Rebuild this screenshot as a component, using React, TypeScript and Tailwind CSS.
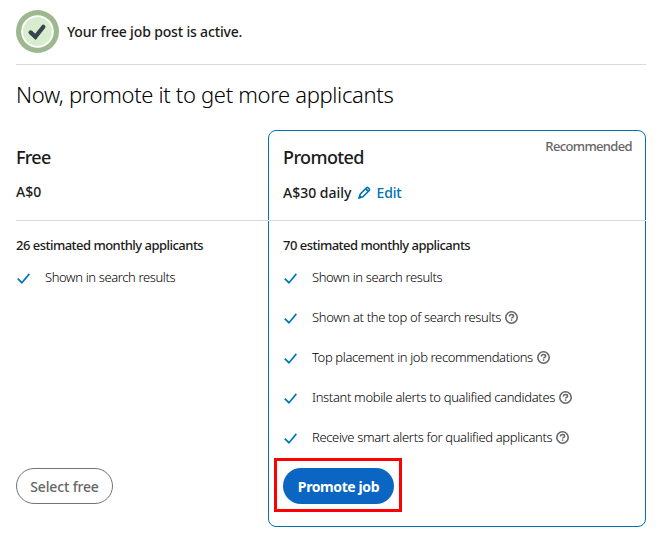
const FONT = "font-['Noto_Sans','Open_Sans',sans-serif]";

function CheckIcon() {
  return (
    <svg className="mt-[3px] h-[11px] w-[13px] shrink-0" viewBox="0 0 13 11" fill="none">
      <path d="M0.8 5.6 4.9 9.7 12.4 0.9" stroke="#0077b5" strokeWidth="1.7" />
    </svg>
  );
}

function HelpIcon() {
  return (
    <svg className="ml-[4px] h-[13px] w-[13px] shrink-0" viewBox="0 0 13 13" fill="none" stroke="#666">
      <circle cx="6.5" cy="6.5" r="5.7" strokeWidth="1.6" />
      <path d="M4.4 5.4C4.4 4.2 5.3 3.6 6.5 3.6s2.1.6 2.1 1.6c0 1.2-2 1.2-2 2.4" strokeWidth="1.5" />
      <path d="M5.8 9.1h1.5" strokeWidth="1.5" />
    </svg>
  );
}

function PencilIcon() {
  return (
    <svg className="ml-[7px] h-[13px] w-[13px] shrink-0" viewBox="0 0 13 13" fill="none" stroke="#0073b1">
      <path d="M1.1 11.9 2.2 8.1 8.5 1.8c.5-.5 1.1-.5 1.6 0l1.1 1.1c.5.5.5 1.1 0 1.6L4.9 10.8Z" strokeWidth="1.6" />
      <path d="M7.6 2.7l2.7 2.7" strokeWidth="1.8" />
      <path d="M.4 12.6 1.6 8.8 4.2 11.4Z" fill="#0073b1" stroke="none" />
    </svg>
  );
}

function SuccessBadge() {
  return (
    <svg className="h-[43px] w-[43px] shrink-0" viewBox="0 0 43 43">
      <circle cx="21.5" cy="21.5" r="21.5" fill="#9db78f" />
      <circle cx="21.5" cy="21.5" r="16.3" fill="#fff" />
      <circle cx="21.5" cy="21.5" r="14.5" fill="#d7edce" />
      <path d="M14.6 22.4 19.4 26.9 27.4 16.8" fill="none" stroke="#38434f" strokeWidth="4.2" strokeLinecap="round" />
    </svg>
  );
}

function Feature({ text, tracking, help = false }: { text: string; tracking: string; help?: boolean }) {
  return (
    <li className="flex h-10 items-center">
      <CheckIcon />
      <span className={`ml-[15px] pt-[2px] text-[13px] font-light text-black ${tracking}`}>{text}</span>
      {help && <HelpIcon />}
    </li>
  );
}

export default function App() {
  return (
    <main className={`h-[544px] w-[663px] overflow-hidden bg-white pr-[17px] pl-4 pt-[10px] whitespace-nowrap text-[#1a1a1a] ${FONT}`}>
      <header className="flex h-[55px] items-start border-b border-[#d9d9d9]">
        <SuccessBadge />
        <p className="ml-2 mt-[11px] text-[14px] leading-[22px] font-medium tracking-[-0.16px]">
          Your free job post is active.
        </p>
      </header>
      <h1 className="flex h-[65px] items-center pb-[7px] text-[22px] font-light tracking-[-0.34px] text-black">
        Now, promote it to get more applicants
      </h1>
      <div className="grid h-[397px] grid-cols-[252px_378px]">
        <section className="flex flex-col pt-px">
          <div className="h-[90px] border-b border-[#d9d9d9] pt-[13px]">
            <h2 className="text-[18px] leading-[26px] font-medium tracking-[-0.7px]">Free</h2>
            <p className="mt-[11px] text-[14px] leading-[22px] font-medium">A$0</p>
          </div>
          <p className="mt-[14px] text-[13px] leading-5 font-medium tracking-[-0.52px]">26 estimated monthly applicants</p>
          <ul className="mt-[2px] pl-px">
            <Feature text="Shown in search results" tracking="tracking-[-0.38px]" />
          </ul>
          <button className="mt-[171px] h-9 w-[97px] rounded-full border border-[#737373] pt-px text-[14px] font-medium tracking-[-0.15px] text-[#666]">
            Select free
          </button>
        </section>
        <section className="flex flex-col rounded-[8px] border border-[#0073b1]">
          <div className="-mx-px flex h-[90px] justify-between border-b border-[#d9d9d9] pt-[13px] pr-[14px] pl-[15px]">
            <div>
              <h2 className="text-[18px] leading-[26px] font-medium tracking-[-0.6px]">Promoted</h2>
              <div className="mt-[11px] flex items-center text-[14px] leading-[22px] font-medium">
                <span>A$30 daily</span>
                <PencilIcon />
                <a className="ml-[5px] pt-px font-medium tracking-[-0.15px] text-[#0073b1]">Edit</a>
              </div>
            </div>
            <span className="-mt-[8px] text-[13px] leading-5 font-medium tracking-[-0.65px] text-[#666]">Recommended</span>
          </div>
          <div className="pl-[15px]">
            <p className="-ml-px mt-[14px] text-[13px] leading-5 font-medium tracking-[-0.52px]">70 estimated monthly applicants</p>
            <ul className="mt-[2px]">
              <Feature text="Shown in search results" tracking="tracking-[-0.38px]" />
              <Feature text="Shown at the top of search results" tracking="tracking-[-0.34px]" help />
              <Feature text="Top placement in job recommendations" tracking="tracking-[-0.37px]" help />
              <Feature text="Instant mobile alerts to qualified candidates" tracking="tracking-[-0.34px]" help />
              <Feature text="Receive smart alerts for qualified applicants" tracking="tracking-[-0.35px]" help />
            </ul>
          </div>
          <div className="ml-[5px] mt-px h-[54px] w-[128px] border-[3px] border-[#ff0000] pt-[7px] pl-[6px]">
            <button className="h-9 w-[111px] rounded-full bg-[#0a66c2] pt-px text-[14px] font-bold tracking-[-0.4px] text-white">
              Promote job
            </button>
          </div>
        </section>
      </div>
    </main>
  );
}
